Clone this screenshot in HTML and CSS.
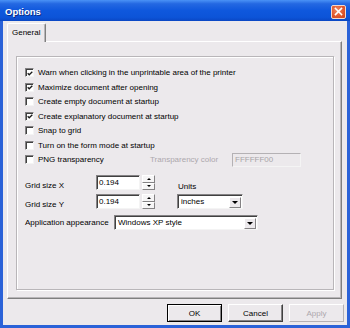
FILE: index.html
```html
<!DOCTYPE html>
<html lang="en">
<head>
    <meta charset="UTF-8">
    <meta name="viewport" content="width=device-width, initial-scale=1.0">
    <title>Options</title>
    <link rel="stylesheet" href="styles.css">
</head>
<body>
    <div class="window">
        <!-- Title bar -->
        <div class="titlebar">
            <span class="title">Options</span>
            <span class="close">
                <svg width="9" height="9" viewBox="0 0 9 9">
                    <path d="M1.5 1.5L7.5 7.5M7.5 1.5L1.5 7.5" stroke="#fff" stroke-width="1.6" stroke-linecap="square"/>
                </svg>
            </span>
        </div>

        <div class="client">
            <div class="tabs">
                <div class="tab">General</div>
            </div>

            <div class="panel">
                <div class="group">
                    <div class="check">
                        <span class="box"><svg width="7" height="7" viewBox="0 0 7 7"><path d="M0.8 3.2L2.6 5L6.2 1.4" stroke="#1a1a1a" stroke-width="1.5" fill="none"/></svg></span>
                        Warn when clicking in the unprintable area of the printer
                    </div>
                    <div class="check">
                        <span class="box"><svg width="7" height="7" viewBox="0 0 7 7"><path d="M0.8 3.2L2.6 5L6.2 1.4" stroke="#1a1a1a" stroke-width="1.5" fill="none"/></svg></span>
                        Maximize document after opening
                    </div>
                    <div class="check">
                        <span class="box"></span>
                        Create empty document at startup
                    </div>
                    <div class="check">
                        <span class="box"><svg width="7" height="7" viewBox="0 0 7 7"><path d="M0.8 3.2L2.6 5L6.2 1.4" stroke="#1a1a1a" stroke-width="1.5" fill="none"/></svg></span>
                        Create explanatory document at startup
                    </div>
                    <div class="check">
                        <span class="box"></span>
                        Snap to grid
                    </div>
                    <div class="check">
                        <span class="box"></span>
                        Turn on the form mode at startup
                    </div>
                    <div class="check">
                        <span class="box"></span>
                        <span class="png-label">PNG transparency</span>
                        <span class="disabled-label">Transparency color</span>
                        <span class="field disabled">FFFFFF00</span>
                    </div>

                    <!-- Grid size and units -->
                    <div class="sizes">
                        <div class="size-col">
                            <div class="size-row">
                                <span class="size-label">Grid size X</span>
                                <span class="field num">0.194</span>
                                <span class="spin">
                                    <span class="spin-btn"><span class="tri-up"></span></span>
                                    <span class="spin-btn"><span class="tri-down"></span></span>
                                </span>
                            </div>
                            <div class="size-row">
                                <span class="size-label">Grid size Y</span>
                                <span class="field num">0.194</span>
                                <span class="spin">
                                    <span class="spin-btn"><span class="tri-up"></span></span>
                                    <span class="spin-btn"><span class="tri-down"></span></span>
                                </span>
                            </div>
                        </div>
                        <div class="units">
                            <div class="units-label">Units</div>
                            <div class="combo units-combo">
                                <span class="combo-text">inches</span>
                                <span class="combo-btn"><span class="tri-down big"></span></span>
                            </div>
                        </div>
                    </div>

                    <div class="appearance-row">
                        <span class="appearance-label">Application appearance</span>
                        <div class="combo appearance-combo">
                            <span class="combo-text">Windows XP style</span>
                            <span class="combo-btn"><span class="tri-down big"></span></span>
                        </div>
                    </div>
                </div>
            </div>

            <div class="buttons">
                <span class="btn default">OK</span>
                <span class="btn">Cancel</span>
                <span class="btn off">Apply</span>
            </div>
        </div>
    </div>
</body>
</html>
```

FILE: styles.css
```css
/* Dialog frame */
body {
    margin: 0;
    font-family: "Liberation Sans", Arial, sans-serif;
    font-size: 8px;
    color: #000;
}

.window {
    width: 350px;
    height: 328px;
    box-sizing: border-box;
    background: #2b62d8;
    display: flex;
    flex-direction: column;
}

.titlebar {
    height: 21px;
    flex: none;
    display: flex;
    align-items: center;
    justify-content: space-between;
    padding: 0 4px 0 5px;
    background: linear-gradient(#4a92f6 0, #2468e2 18%, #0f58dd 50%, #0c54d8 82%, #0a47c4 100%);
}

.title {
    color: #fff;
    font-weight: bold;
    font-size: 9.5px;
    text-shadow: 1px 1px 0 #0b2d86;
    margin-top: 1px;
}

.close {
    width: 15px;
    height: 14px;
    box-sizing: border-box;
    margin-top: 2px;
    border: 1px solid #f4d8cc;
    border-radius: 2px;
    background: radial-gradient(circle at 40% 35%, #f08a62 0, #e0592f 55%, #c8431d 100%);
    display: flex;
    align-items: center;
    justify-content: center;
}

.client {
    flex: 1;
    margin: 0 3px 3px 3px;
    padding: 2px 5px 0 4px;
    background: #ece9ec;
    display: flex;
    flex-direction: column;
}

/* Tab strip */
.tabs {
    height: 18px;
    display: flex;
}

.tab {
    position: relative;
    z-index: 1;
    width: 39px;
    height: 19px;
    box-sizing: border-box;
    padding-left: 4px;
    line-height: 17px;
    background: #ece9ec;
    border-top: 1px solid #fff;
    border-left: 1px solid #fff;
    border-right: 1px solid #7f7f7f;
    box-shadow: inset -1px 0 0 #b8b5b8;
    border-radius: 2px 2px 0 0;
}

.panel {
    height: 258px;
    flex: none;
    box-sizing: border-box;
    display: flex;
    flex-direction: column;
    padding: 14px 7px 8px 8px;
    border: 1px solid;
    border-color: #fff #7f7f7f #7f7f7f #fff;
    box-shadow: inset -1px -1px 0 #b8b5b8;
}

.group {
    flex: 1;
    padding: 8.5px 8px 0 8px;
    border: 1px solid #b9b6b9;
    box-shadow: inset 1px 1px 0 #fff, 1px 1px 0 #fff;
}

/* Check boxes */
.check {
    height: 14.5px;
    display: flex;
    align-items: center;
    white-space: nowrap;
}

.box {
    width: 9px;
    height: 9px;
    box-sizing: border-box;
    flex: none;
    margin-right: 4px;
    background: #fff;
    border: 1px solid;
    border-color: #848284 #f4f4f4 #f4f4f4 #848284;
    box-shadow: inset 1px 1px 0 #404040;
    display: flex;
    align-items: center;
    justify-content: center;
}

.box svg {
    margin: 1px 0 0 1px;
}

.png-label {
    width: 112px;
}

.disabled-label {
    width: 82px;
    color: #aca8ac;
}

/* Text fields */
.field {
    height: 15px;
    box-sizing: border-box;
    padding-left: 2px;
    line-height: 13px;
    background: #fff;
    border: 1px solid;
    border-color: #848284 #f4f4f4 #f4f4f4 #848284;
    box-shadow: inset 1px 1px 0 #404040;
}

.field.disabled {
    width: 69px;
    height: 14px;
    line-height: 12px;
    color: #a8a5a8;
    background: #ece9ec;
    border-color: #b4b1b4 #f4f4f4 #f4f4f4 #b4b1b4;
    box-shadow: none;
}

.sizes {
    margin-top: 8px;
    display: flex;
    align-items: flex-end;
}

.size-col {
    display: flex;
    flex-direction: column;
    gap: 4px;
}

.size-row {
    display: flex;
    align-items: center;
}

.size-label {
    width: 71px;
    padding-top: 5px;
}

.num {
    width: 44px;
}

.spin {
    width: 13px;
    height: 15px;
    margin-left: 2px;
    display: flex;
    flex-direction: column;
}

.spin-btn {
    flex: 1;
    box-sizing: border-box;
    background: #f6f5f6;
    border: 1px solid;
    border-color: #fff #848284 #848284 #fff;
    display: flex;
    align-items: center;
    justify-content: center;
}

.tri-up,
.tri-down {
    width: 0;
    height: 0;
    border-left: 2px solid transparent;
    border-right: 2px solid transparent;
}

.tri-up {
    border-bottom: 2px solid #000;
}

.tri-down {
    border-top: 2px solid #000;
}

.tri-down.big {
    border-left-width: 3px;
    border-right-width: 3px;
    border-top-width: 3px;
}

/* Combo boxes */
.units {
    margin-left: 22px;
}

.units-label {
    margin: 0 0 3px 1px;
}

.combo {
    height: 15px;
    box-sizing: border-box;
    display: flex;
    align-items: center;
    background: #fff;
    border: 1px solid;
    border-color: #848284 #f4f4f4 #f4f4f4 #848284;
    box-shadow: inset 1px 1px 0 #404040;
}

.combo-text {
    flex: 1;
    padding-left: 3px;
    white-space: nowrap;
}

.combo-btn {
    width: 12px;
    height: 11px;
    box-sizing: border-box;
    margin: 1px 1px 0 0;
    background: #ece9ec;
    border: 1px solid;
    border-color: #fff #848284 #848284 #fff;
    display: flex;
    align-items: center;
    justify-content: center;
}

.units-combo {
    width: 66px;
}

.appearance-row {
    margin-top: 6px;
    display: flex;
    align-items: center;
}

.appearance-label {
    width: 89px;
}

.appearance-combo {
    width: 144px;
}

/* Dialog buttons */
.buttons {
    margin: 5px -2px 0 0;
    display: flex;
    justify-content: flex-end;
    gap: 6px;
}

.btn {
    width: 55px;
    height: 18px;
    box-sizing: border-box;
    display: flex;
    align-items: center;
    justify-content: center;
    background: #ece9ec;
    border: 1px solid;
    border-color: #fff #404040 #404040 #fff;
    box-shadow: inset -1px -1px 0 #848284;
}

.btn.default {
    border: 1px solid #000;
    box-shadow: inset 1px 1px 0 #fff, inset -1px -1px 0 #848284;
}

.btn.off {
    color: #aca8ac;
    border-color: #fff #b4b1b4 #b4b1b4 #fff;
    box-shadow: none;
}
```
